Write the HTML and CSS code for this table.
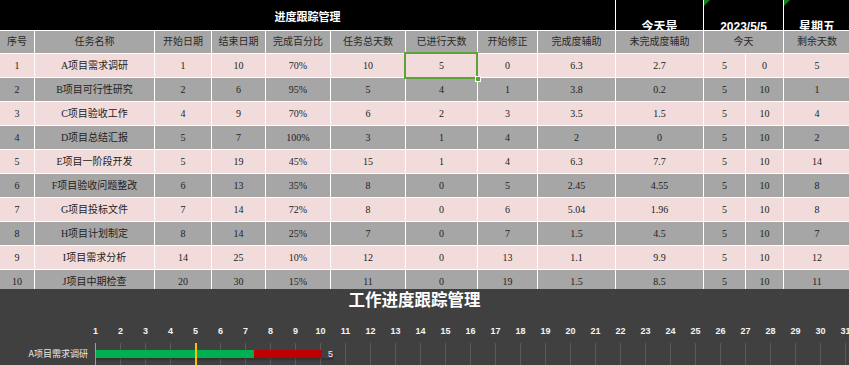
FILE: index.html
```html
<!DOCTYPE html>
<html lang="zh">
<head>
<meta charset="utf-8">
<title>进度跟踪管理</title>
<link rel="stylesheet" href="styles.css">
</head>
<body>
<div class="sheet">
  <div class="c title">进度跟踪管理</div>
  <div class="c top">今天是</div>
  <div class="c top span2 flag">2023/5/5</div>
  <div class="c top flag">星期五</div>

  <div class="row head">
    <div class="c">序号</div><div class="c">任务名称</div><div class="c">开始日期</div><div class="c">结束日期</div><div class="c">完成百分比</div><div class="c">任务总天数</div><div class="c">已进行天数</div><div class="c">开始修正</div><div class="c">完成度辅助</div><div class="c">未完成度辅助</div><div class="c span2">今天</div><div class="c">剩余天数</div>
  </div>

  <div class="row pink">
    <div class="c">1</div><div class="c">A项目需求调研</div><div class="c">1</div><div class="c">10</div><div class="c">70%</div><div class="c">10</div><div class="c sel">5<span class="sel-box"><i class="sel-handle"></i></span></div><div class="c">0</div><div class="c">6.3</div><div class="c">2.7</div><div class="c">5</div><div class="c">0</div><div class="c">5</div>
  </div>
  <div class="row gray">
    <div class="c">2</div><div class="c">B项目可行性研究</div><div class="c">2</div><div class="c">6</div><div class="c">95%</div><div class="c">5</div><div class="c">4</div><div class="c">1</div><div class="c">3.8</div><div class="c">0.2</div><div class="c">5</div><div class="c">10</div><div class="c">1</div>
  </div>
  <div class="row pink">
    <div class="c">3</div><div class="c">C项目验收工作</div><div class="c">4</div><div class="c">9</div><div class="c">70%</div><div class="c">6</div><div class="c">2</div><div class="c">3</div><div class="c">3.5</div><div class="c">1.5</div><div class="c">5</div><div class="c">10</div><div class="c">4</div>
  </div>
  <div class="row gray">
    <div class="c">4</div><div class="c">D项目总结汇报</div><div class="c">5</div><div class="c">7</div><div class="c">100%</div><div class="c">3</div><div class="c">1</div><div class="c">4</div><div class="c">2</div><div class="c">0</div><div class="c">5</div><div class="c">10</div><div class="c">2</div>
  </div>
  <div class="row pink">
    <div class="c">5</div><div class="c">E项目一阶段开发</div><div class="c">5</div><div class="c">19</div><div class="c">45%</div><div class="c">15</div><div class="c">1</div><div class="c">4</div><div class="c">6.3</div><div class="c">7.7</div><div class="c">5</div><div class="c">10</div><div class="c">14</div>
  </div>
  <div class="row gray">
    <div class="c">6</div><div class="c">F项目验收问题整改</div><div class="c">6</div><div class="c">13</div><div class="c">35%</div><div class="c">8</div><div class="c">0</div><div class="c">5</div><div class="c">2.45</div><div class="c">4.55</div><div class="c">5</div><div class="c">10</div><div class="c">8</div>
  </div>
  <div class="row pink">
    <div class="c">7</div><div class="c">G项目投标文件</div><div class="c">7</div><div class="c">14</div><div class="c">72%</div><div class="c">8</div><div class="c">0</div><div class="c">6</div><div class="c">5.04</div><div class="c">1.96</div><div class="c">5</div><div class="c">10</div><div class="c">8</div>
  </div>
  <div class="row gray">
    <div class="c">8</div><div class="c">H项目计划制定</div><div class="c">8</div><div class="c">14</div><div class="c">25%</div><div class="c">7</div><div class="c">0</div><div class="c">7</div><div class="c">1.5</div><div class="c">4.5</div><div class="c">5</div><div class="c">10</div><div class="c">7</div>
  </div>
  <div class="row pink">
    <div class="c">9</div><div class="c">I项目需求分析</div><div class="c">14</div><div class="c">25</div><div class="c">10%</div><div class="c">12</div><div class="c">0</div><div class="c">13</div><div class="c">1.1</div><div class="c">9.9</div><div class="c">5</div><div class="c">10</div><div class="c">12</div>
  </div>
  <div class="row gray">
    <div class="c">10</div><div class="c">J项目中期检查</div><div class="c">20</div><div class="c">30</div><div class="c">15%</div><div class="c">11</div><div class="c">0</div><div class="c">19</div><div class="c">1.5</div><div class="c">8.5</div><div class="c">5</div><div class="c">10</div><div class="c">11</div>
  </div>
</div>

<div class="chart">
  <div class="chart-title">工作进度跟踪管理</div>
  <div class="axis">
    <span>1</span><span>2</span><span>3</span><span>4</span><span>5</span><span>6</span><span>7</span><span>8</span><span>9</span><span>10</span><span>11</span><span>12</span><span>13</span><span>14</span><span>15</span><span>16</span><span>17</span><span>18</span><span>19</span><span>20</span><span>21</span><span>22</span><span>23</span><span>24</span><span>25</span><span>26</span><span>27</span><span>28</span><span>29</span><span>30</span><span>31</span>
  </div>
  <div class="track">
    <div class="task">A项目需求调研</div>
    <div class="plot">
      <div class="bar">
        <span class="done" style="width:158px"></span><span class="rest" style="width:68px"></span>
        <span class="bar-val">5</span>
      </div>
      <i class="today" style="left:99px"></i>
    </div>
  </div>
</div>
</body>
</html>
```

FILE: styles.css
```css
* { box-sizing: border-box; margin: 0; padding: 0; }

html, body {
  width: 849px;
  height: 365px;
  overflow: hidden;
  background: #ffffff;
}

body {
  font-family: "Liberation Serif", "Noto Sans CJK SC", serif;
  font-size: 10px;
  color: #222;
}

.sheet {
  display: grid;
  grid-template-columns: 34px 119px 56px 53px 64px 74px 71px 59px 77px 87px 41px 37px 66px;
  grid-template-rows: 30px 22px repeat(9, 23px) 19px;
  column-gap: 1px;
  row-gap: 1px;
  background: #ffffff;
  width: 849px;
}

.row { display: contents; }

.c {
  text-align: center;
  line-height: 23px;
  white-space: nowrap;
  overflow: hidden;
}

.span2 { grid-column: span 2; }

.title {
  grid-column: span 9;
  background: #000;
  color: #fff;
  font-family: "Noto Sans CJK SC", sans-serif;
  font-weight: bold;
  font-size: 11px;
  line-height: 14px;
  padding-top: 9px;
}

.top {
  background: #000;
  color: #fff;
  font-family: "Liberation Sans", "Noto Sans CJK SC", sans-serif;
  font-weight: bold;
  font-size: 12px;
  line-height: 14px;
  padding-top: 20px;
  position: relative;
}

.flag::before {
  content: "";
  position: absolute;
  left: 0;
  top: 0;
  border-top: 6px solid #1d7a1d;
  border-right: 6px solid transparent;
}

.head .c {
  background: #a6a6a6;
  line-height: 22px;
  color: #2a2a2a;
}

.pink .c { background: #f2dcdb; }
.gray .c { background: #a6a6a6; }

.sel {
  position: relative;
  overflow: visible;
}

.sel-box {
  position: absolute;
  left: -2px;
  top: -2px;
  right: -1px;
  bottom: -2px;
  border: 2px solid #5ea33a;
  z-index: 2;
}

.sel-handle {
  position: absolute;
  right: -5px;
  bottom: -5px;
  width: 6px;
  height: 6px;
  background: #5ea33a;
  border: 1px solid #fff;
}

/* chart */
.chart {
  height: 76px;
  background: #404040;
  color: #fff;
  overflow: hidden;
}

.chart-title {
  font-family: "Noto Sans CJK SC", sans-serif;
  font-weight: bold;
  font-size: 16.5px;
  line-height: 20px;
  text-align: center;
  padding-right: 20px;
}

.axis {
  display: flex;
  margin-top: 16px;
  margin-left: 83px;
  height: 12px;
}

.axis span {
  flex: 0 0 25px;
  text-align: center;
  font-family: "Liberation Sans", sans-serif;
  font-size: 9px;
  font-weight: bold;
  line-height: 12px;
  color: #f4f4f4;
}

.track {
  display: flex;
  margin-top: 6px;
  height: 22px;
}

.task {
  flex: 0 0 95px;
  text-align: right;
  padding-right: 7px;
  padding-top: 5px;
  font-family: "Noto Sans CJK SC", sans-serif;
  font-size: 9px;
  line-height: 12px;
  color: #e8e8e8;
}

.plot {
  flex: 1;
  position: relative;
  border-left: 1px solid #a0a0a0;
  background-image: repeating-linear-gradient(to right, transparent 0 24px, #5a5a5a 24px 25px);
}

.bar {
  display: flex;
  align-items: center;
  margin-top: 7px;
  height: 8px;
  box-shadow: 0 2px 2px rgba(0,0,0,0.25);
  width: max-content;
}

.bar span.done, .bar span.rest {
  display: block;
  height: 8px;
}

.done { background: #00b050; }
.rest { background: #c00000; }

.bar-val {
  margin-left: 6px;
  font-family: "Liberation Sans", sans-serif;
  font-size: 9px;
  line-height: 10px;
  color: #f0f0f0;
}

.today {
  position: absolute;
  top: 0;
  bottom: 0;
  width: 2px;
  background: #ffc000;
}
```
